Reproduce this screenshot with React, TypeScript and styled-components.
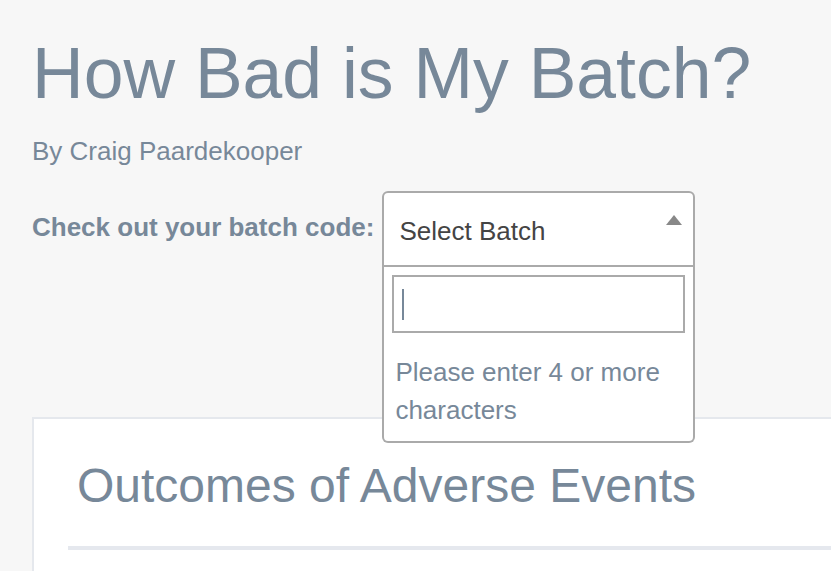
import React from "react";
import styled, { createGlobalStyle } from "styled-components";

const GlobalStyle = createGlobalStyle`
  html, body {
    margin: 0;
    padding: 0;
    background: #f7f7f7;
    overflow: hidden;
  }
  body {
    font-family: "Liberation Sans", Arial, sans-serif;
    color: #778899;
  }
`;

const Page = styled.div`
  padding: 30px 0 0 32px;
`;

const Title = styled.h1`
  margin: 0;
  font-size: 71.5px;
  line-height: 86px;
  font-weight: 400;
  color: #778899;
  white-space: nowrap;
`;

const Byline = styled.p`
  margin: 16px 0 0;
  font-size: 26px;
  line-height: 39px;
  color: #778899;
`;

const PickerRow = styled.div`
  display: flex;
  align-items: flex-start;
  gap: 8px;
  margin-top: 20px;
`;

const Label = styled.label`
  padding-top: 17px;
  font-size: 26px;
  line-height: 39px;
  font-weight: 700;
  color: #778899;
  white-space: nowrap;
`;

const Select = styled.div`
  position: relative;
  width: 313px;
  flex: none;
`;

const Selection = styled.div`
  position: relative;
  box-sizing: border-box;
  height: 76px;
  padding: 4px 0 0 15px;
  border: 2px solid #aaa;
  border-radius: 6px 6px 0 0;
  background: #fff;
  font-size: 26px;
  line-height: 68px;
  color: #444;
`;

const Arrow = styled.span`
  position: absolute;
  top: 22px;
  right: 11px;
  width: 0;
  height: 0;
  border-left: 8px solid transparent;
  border-right: 8px solid transparent;
  border-bottom: 10px solid #888;
`;

const Dropdown = styled.div`
  position: absolute;
  top: 100%;
  left: 0;
  right: 0;
  z-index: 2;
  background: #fff;
  border: 2px solid #aaa;
  border-top: none;
  border-radius: 0 0 6px 6px;
`;

const SearchWrap = styled.div`
  padding: 8px;
`;

const SearchBox = styled.div`
  box-sizing: border-box;
  height: 58px;
  border: 2px solid #aaa;
  padding-left: 8px;
  display: flex;
  align-items: center;
`;

const Caret = styled.span`
  display: block;
  width: 2px;
  height: 31px;
  background: #778899;
`;

const Message = styled.div`
  padding: 13px 11px 12px;
  font-size: 26px;
  line-height: 37.5px;
  color: #778899;
`;

const Card = styled.section`
  box-sizing: border-box;
  width: 1200px;
  margin: 150px 0 0;
  padding: 38px 34px 0;
  min-height: 200px;
  background: #fff;
  border: 2px solid #e5e8ed;
`;

const CardTitle = styled.h2`
  margin: 0;
  padding: 0 9px;
  font-size: 48px;
  line-height: 57px;
  font-weight: 400;
  color: #778899;
  white-space: nowrap;
`;

const Rule = styled.div`
  margin-top: 32px;
  height: 4px;
  background: #e5e8ee;
`;

export default function App() {
  return (
    <>
      <GlobalStyle />
      <Page>
        <Title>How Bad is My Batch?</Title>
        <Byline>By Craig Paardekooper</Byline>
        <PickerRow>
          <Label>Check out your batch code:</Label>
          <Select>
            <Selection>
              Select Batch
              <Arrow />
            </Selection>
            <Dropdown>
              <SearchWrap>
                <SearchBox role="textbox">
                  <Caret />
                </SearchBox>
              </SearchWrap>
              <Message>Please enter 4 or more characters</Message>
            </Dropdown>
          </Select>
        </PickerRow>
        <Card>
          <CardTitle>Outcomes of Adverse Events</CardTitle>
          <Rule />
        </Card>
      </Page>
    </>
  );
}
